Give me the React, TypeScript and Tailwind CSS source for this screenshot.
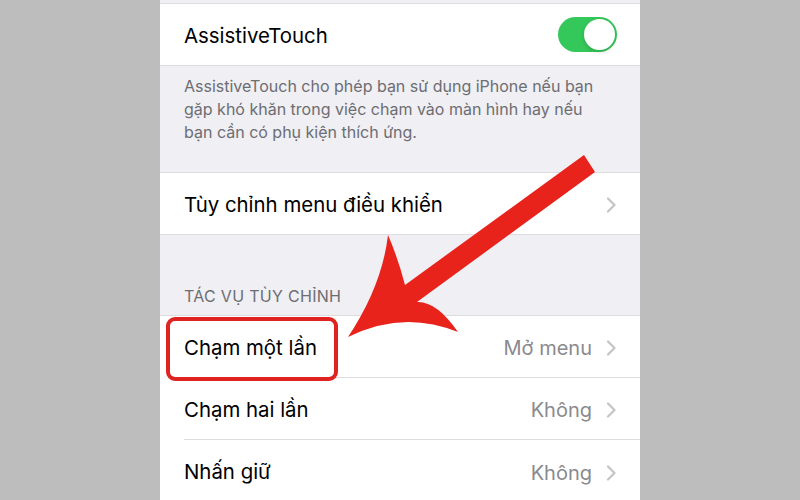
import React from "react";

const font = { fontFamily: "Inter, 'Noto Sans', sans-serif" };

function Chevron() {
  return (
    <svg width="10" height="16" viewBox="0 0 10 16" className="shrink-0">
      <polyline points="2,1.5 8.5,8 2,14.5" fill="none" stroke="#c4c4c7" strokeWidth="2.2" strokeLinecap="round" strokeLinejoin="round" />
    </svg>
  );
}

function ActionRow({ label, value, last }: { label: string; value: string; last?: boolean }) {
  return (
    <div className="flex h-[62px] shrink-0 bg-white pl-[24px]">
      <div className={"flex flex-1 items-center justify-between pr-[24px] pt-[3px] " + (last ? "" : "border-b border-[#dcdce0]")}>
        <span className="text-[20.4px] text-black">{label}</span>
        <div className="flex items-center gap-[14px]">
          <span className="text-[20px] text-[#8a8a8e]">{value}</span>
          <Chevron />
        </div>
      </div>
    </div>
  );
}

export default function App() {
  return (
    <div className="relative flex h-[500px] w-[800px] justify-center overflow-hidden bg-[#bdbdbd]" style={font}>
      <div className="flex h-full w-[480px] flex-col bg-[#efeff4]">
        <div className="h-[4px] shrink-0 border-b border-[#dcdce0]" />
        <div className="flex h-[62px] shrink-0 items-center justify-between border-b border-[#dcdce0] bg-white pl-[24px] pr-[23px]">
          <span className="pt-[4px] text-[20.4px] text-black">AssistiveTouch</span>
          <div className="flex h-[35px] w-[59px] items-center justify-end rounded-full bg-[#34c759] pr-[2px]">
            <div className="h-[31px] w-[31px] rounded-full bg-white shadow-[0_2px_4px_rgba(0,0,0,0.15)]" />
          </div>
        </div>
        <div className="h-[106px] shrink-0 pl-[24px] pt-[9px] text-[16px] leading-[23px] text-[#6d6d72]">
          AssistiveTouch cho phép bạn sử dụng iPhone nếu bạn
          <br />
          gặp khó khăn trong việc chạm vào màn hình hay nếu
          <br />
          bạn cần có phụ kiện thích ứng.
        </div>
        <div className="flex h-[63px] shrink-0 items-center justify-between border-y border-[#dcdce0] bg-white pl-[24px] pr-[24px] pt-[3px]">
          <span className="text-[20.4px] text-black">Tùy chỉnh menu điều khiển</span>
          <Chevron />
        </div>
        <div className="flex h-[81px] shrink-0 items-end border-b border-[#dcdce0] px-[24px] pb-[10px]">
          <span className="text-[16px] leading-[18px] tracking-[0.3px] text-[#6d6d72]">TÁC VỤ TÙY CHỈNH</span>
        </div>
        <ActionRow label="Chạm một lần" value="Mở menu" />
        <ActionRow label="Chạm hai lần" value="Không" />
        <ActionRow label="Nhấn giữ" value="Không" last />
      </div>
      <svg className="pointer-events-none absolute inset-0" width="800" height="500" viewBox="0 0 800 500">
        <rect x="168" y="319" width="168" height="60" rx="7" fill="none" stroke="#de2320" strokeWidth="4" />
        <path
          d="M584 155 L595 172 L417 302 Q436.5 301 458 332 Q403 309.5 348 337 Q382 286 388 235 Q398 258 405 285 Z"
          fill="#e8231c"
        />
      </svg>
    </div>
  );
}
